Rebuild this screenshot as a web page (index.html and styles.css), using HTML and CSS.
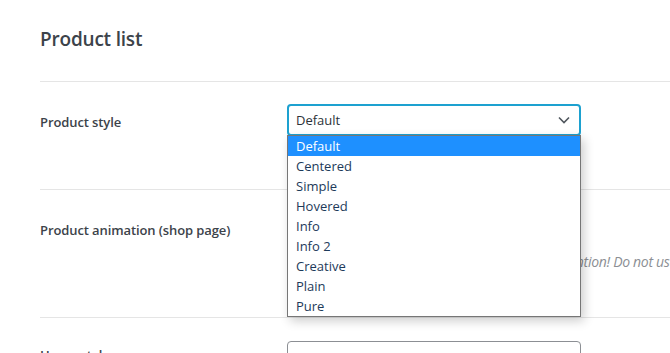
FILE: index.html
```html
<!DOCTYPE html>
<html lang="en">
<head>
	<meta charset="UTF-8">
	<title>Product list</title>
	<link rel="stylesheet" href="styles.css">
</head>
<body>
	<div class="wrap">
		<h2 class="title">Product list</h2>

		<div class="row row-style">
			<div class="label">Product style</div>
			<div class="field">
				<div class="select-box">
					<div class="select is-open">
						<span>Default</span>
						<svg class="chevron" width="12" height="8" viewBox="0 0 12 8"><path d="M1 1.5l5 5 5-5" fill="none" stroke="#50575e" stroke-width="1.6"/></svg>
					</div>
					<ul class="options">
						<li class="active">Default</li>
						<li>Centered</li>
						<li>Simple</li>
						<li>Hovered</li>
						<li>Info</li>
						<li>Info 2</li>
						<li>Creative</li>
						<li>Plain</li>
						<li>Pure</li>
					</ul>
				</div>
			</div>
		</div>

		<div class="row row-anim">
			<div class="label">Product animation (shop page)</div>
			<div class="field">
				<p class="notice">Attention! Do not use it with the hovered product style.</p>
			</div>
		</div>

		<div class="row row-hover">
			<div class="label">Hover style</div>
			<div class="field">
				<div class="select plain"><span>Image swap</span></div>
			</div>
		</div>
	</div>
</body>
</html>
```

FILE: styles.css
```css
body {
	margin:0;
	font-family:"Open Sans", "Noto Sans", sans-serif;
	color:#3c434a;
	background:#fff;
	overflow:hidden;
	height:353px;
}

.wrap {
	padding-left:40px;
}

.title {
	margin:0;
	padding:26px 0 0;
	height:82px;
	box-sizing:border-box;
	font-size:19px;
	font-weight:600;
	color:#3c434a;
	border-bottom:1px solid #e5e5e5;
	letter-spacing:-0.2px;
}

.row {
	display:flex;
	border-bottom:1px solid #e5e5e5;
}
.row-style {
	height:107px;
}
.row-anim {
	height:127px;
}
.row-hover {
	border-bottom:0;
}

.label {
	flex:0 0 247px;
	padding-top:31px;
	font-size:13px;
	font-weight:600;
	color:#3c434a;
	letter-spacing:-0.1px;
	white-space:nowrap;
}
.row-hover .label {
	padding-top:28px;
}

.field {
	flex:1;
	min-width:0;
	padding-top:22px;
}
.row-hover .field {
	padding-top:23px;
}

.select-box {
	position:relative;
	width:294px;
}

.select {
	box-sizing:border-box;
	width:294px;
	height:32px;
	display:flex;
	align-items:center;
	justify-content:space-between;
	padding:0 10px 0 8px;
	font-size:13px;
	color:#2c3338;
	border:1px solid #8c8f94;
	border-radius:4px;
	background:#fff;
}
.select.is-open {
	border:2px solid #1da1d0;
	padding-left:7px;
	padding-right:9px;
}
.chevron {
	display:block;
}

.options {
	position:absolute;
	top:31px;
	left:0;
	width:294px;
	box-sizing:border-box;
	margin:0;
	padding:0;
	list-style:none;
	background:#fff;
	border:1px solid #767676;
	box-shadow:3px 4px 10px rgba(0,0,0,0.2);
	z-index:5;
}
.options li {
	height:20px;
	line-height:20px;
	padding-left:8px;
	font-size:13px;
	color:#1d3a5a;
}
.options li.active {
	background:#1e90ff;
	color:#fff;
}

.notice {
	margin:40px 0 0 266px;
	font-size:14px;
	font-style:italic;
	color:#8c8f94;
	white-space:nowrap;
	letter-spacing:-0.3px;
}
```
